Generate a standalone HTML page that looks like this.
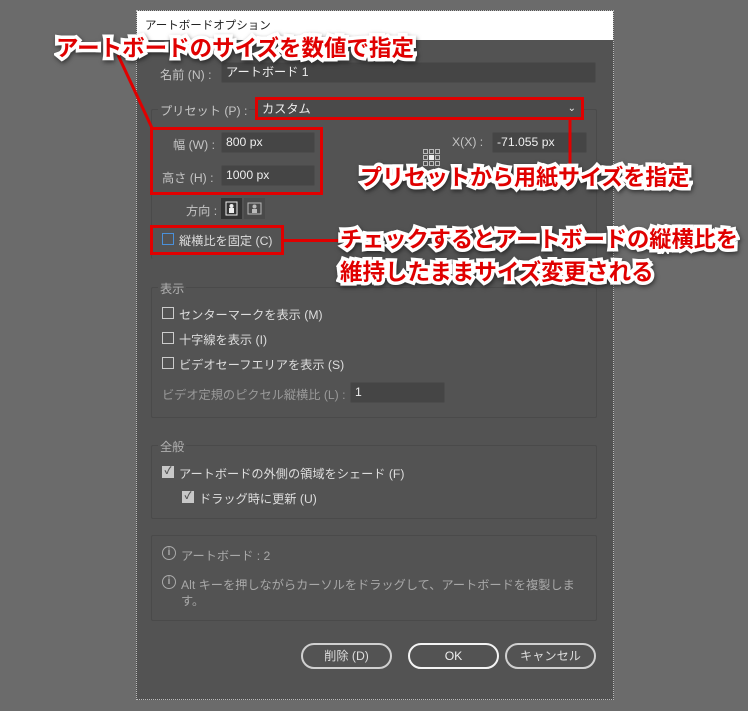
<!DOCTYPE html>
<html><head><meta charset="utf-8"><style>
*{margin:0;padding:0;box-sizing:border-box}
body{width:748px;height:711px;background:#6b6b6b;position:relative;overflow:hidden;font-family:"Liberation Sans","Noto Sans CJK JP",sans-serif;font-size:12.2px;color:#d4d4d4}
.a{position:absolute}
#dlg{left:136px;top:10px;width:478px;height:690px;background:#535353;border:1px dotted #bbb}
#title{left:137px;top:11px;width:476px;height:29px;background:#fff;color:#222;font-size:11.5px;padding:6px 8px}
.lbl{color:#c4c4c4;white-space:nowrap}
.in{background:#454545;border:1px solid #4c4c4c;border-radius:2px;color:#eee;padding:2px 4px;line-height:15px}
.grp{border:1px solid #4a4a4a;border-radius:2px}
.glab{background:#535353;color:#b0b0b0;padding:0 2px}
.cb{width:12px;height:12px;border:1px solid #ccc}
.cbc{width:12px;height:12px;background:#c8c8c8;color:#555;font-size:10px;line-height:12px;text-align:center;font-weight:bold}
.red{border:3px solid #e00000}
.btn{height:26px;border:2px solid #d0d0d0;border-radius:13px;text-align:center;line-height:22px;color:#ddd}
.ann{color:#e00000;font-weight:bold;white-space:nowrap;-webkit-text-stroke:7px #fff;paint-order:stroke fill;filter:drop-shadow(1px 2px 2px rgba(0,0,0,.5))}
.info{width:14px;height:14px;border:1.5px solid #aaa;border-radius:50%;font-size:10px;line-height:11px;text-align:center;color:#aaa;font-weight:bold}
</style></head><body>
<div id="dlg" class="a"></div>
<div id="title" class="a">アートボードオプション</div>

<div class="a lbl" style="left:160px;top:65px">名前 (N) :</div>
<div class="a in" style="left:221px;top:62px;width:375px;height:21px">アートボード 1</div>

<div class="a grp" style="left:151px;top:109px;width:446px;height:150px;border-bottom:none"></div>
<div class="a glab lbl" style="left:158px;top:101px;color:#c4c4c4">プリセット (P) :</div>
<div class="a in" style="left:257px;top:99px;width:324px;height:19px;background:#4a4a4a">カスタム<span style="position:absolute;right:4px;top:1px;font-size:10px">&#8964;</span></div>
<div class="a red" style="left:255px;top:97px;width:329px;height:23px"></div>

<div class="a lbl" style="left:173px;top:135px">幅 (W) :</div>
<div class="a in" style="left:221px;top:132px;width:94px;height:21px">800 px</div>
<div class="a lbl" style="left:162px;top:168px">高さ (H) :</div>
<div class="a in" style="left:221px;top:165px;width:94px;height:21px">1000 px</div>
<div class="a red" style="left:150px;top:127px;width:173px;height:68px"></div>

<div class="a lbl" style="left:452px;top:135px">X(X) :</div>
<div class="a in" style="left:492px;top:132px;width:95px;height:21px">-71.055 px</div>
<svg class="a" style="left:423px;top:149px" width="18" height="18"><g fill="none" stroke="#bbb" stroke-width="1"><rect x="0.5" y="0.5" width="4" height="4"/><rect x="6.5" y="0.5" width="4" height="4"/><rect x="12.5" y="0.5" width="4" height="4"/><rect x="0.5" y="6.5" width="4" height="4"/><rect x="12.5" y="6.5" width="4" height="4"/><rect x="0.5" y="12.5" width="4" height="4"/><rect x="6.5" y="12.5" width="4" height="4"/><rect x="12.5" y="12.5" width="4" height="4"/></g><rect x="6" y="6" width="5" height="5" fill="#eee"/></svg>

<div class="a lbl" style="left:186px;top:201px">方向 :</div>
<div class="a" style="left:221px;top:198px;width:21px;height:21px;background:#333"><svg width="21" height="21"><rect x="5" y="4" width="11" height="13" fill="none" stroke="#eee"/><circle cx="10.5" cy="8" r="2" fill="#eee"/><rect x="8" y="10" width="5" height="5" fill="#eee"/></svg></div>
<div class="a" style="left:244px;top:198px;width:21px;height:21px;background:#4a4a4a"><svg width="21" height="21"><rect x="4" y="5" width="13" height="11" fill="none" stroke="#bbb"/><circle cx="10.5" cy="8.5" r="2" fill="#bbb"/><rect x="8" y="11" width="5" height="4" fill="#bbb"/></svg></div>

<div class="a cb" style="left:162px;top:233px;border-color:#4a90d9"></div>
<div class="a lbl" style="left:179px;top:231px;color:#ddd">縦横比を固定 (C)</div>
<div class="a red" style="left:150px;top:225px;width:134px;height:30px"></div>
<div class="a" style="left:284px;top:239px;width:58px;height:3px;background:#e00000"></div>

<div class="a grp" style="left:151px;top:287px;width:446px;height:131px"></div>
<div class="a glab" style="left:158px;top:279px">表示</div>
<div class="a cb" style="left:162px;top:307px"></div><div class="a lbl" style="left:179px;top:305px;color:#ddd">センターマークを表示 (M)</div>
<div class="a cb" style="left:162px;top:332px"></div><div class="a lbl" style="left:179px;top:330px;color:#ddd">十字線を表示 (I)</div>
<div class="a cb" style="left:162px;top:357px"></div><div class="a lbl" style="left:179px;top:355px;color:#ddd">ビデオセーフエリアを表示 (S)</div>
<div class="a lbl" style="left:162px;top:385px;color:#9a9a9a">ビデオ定規のピクセル縦横比 (L) :</div>
<div class="a in" style="left:350px;top:382px;width:95px;height:21px">1</div>

<div class="a grp" style="left:151px;top:445px;width:446px;height:74px"></div>
<div class="a glab" style="left:158px;top:437px">全般</div>
<div class="a cbc" style="left:162px;top:466px">✓</div><div class="a lbl" style="left:179px;top:464px;color:#ddd">アートボードの外側の領域をシェード (F)</div>
<div class="a cbc" style="left:182px;top:491px">✓</div><div class="a lbl" style="left:199px;top:489px;color:#ddd">ドラッグ時に更新 (U)</div>

<div class="a grp" style="left:151px;top:535px;width:446px;height:86px"></div>
<div class="a info" style="left:162px;top:546px">i</div><div class="a lbl" style="left:181px;top:546px;color:#a8a8a8">アートボード : 2</div>
<div class="a info" style="left:162px;top:575px">i</div><div class="a lbl" style="left:181px;top:575px;color:#a8a8a8">Alt キーを押しながらカーソルをドラッグして、アートボードを複製しま</div>
<div class="a lbl" style="left:181px;top:591px;color:#a8a8a8">す。</div>

<div class="a btn" style="left:301px;top:643px;width:91px">削除 (D)</div>
<div class="a btn" style="left:408px;top:643px;width:91px;border-color:#f4f4f4;color:#eee">OK</div>
<div class="a btn" style="left:505px;top:643px;width:91px">キャンセル</div>

<svg class="a" style="left:0;top:0" width="748" height="711"><line x1="118" y1="55" x2="152" y2="128" stroke="#e00000" stroke-width="3"/><line x1="570" y1="119" x2="570" y2="164" stroke="#e00000" stroke-width="3"/></svg>

<div class="a ann" style="left:56px;top:33px;font-size:22.5px;line-height:32px">アートボードのサイズを数値で指定</div>
<div class="a ann" style="left:360px;top:162px;font-size:22px;line-height:32px">プリセットから用紙サイズを指定</div>
<div class="a ann" style="left:340px;top:224px;font-size:22.2px;line-height:32px">チェックするとアートボードの縦横比を</div>
<div class="a ann" style="left:340px;top:257px;font-size:22.5px;line-height:32px">維持したままサイズ変更される</div>
</body></html>
